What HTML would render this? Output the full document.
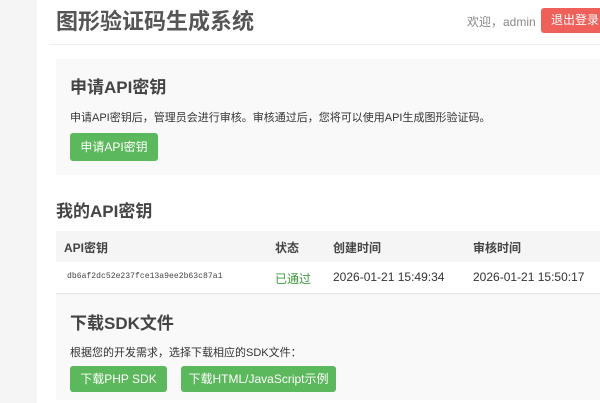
<!DOCTYPE html>
<html><head><meta charset="utf-8"><style>
*{margin:0;padding:0;box-sizing:border-box}
body{width:600px;height:403px;overflow:hidden;background:#fff;font-family:"Liberation Sans","Noto Sans CJK SC",sans-serif;color:#333;position:relative}
.side{position:absolute;left:0;top:0;width:37px;height:403px;background:#f5f5f5}
.abs{position:absolute;white-space:nowrap}
.btn{position:absolute;background:#5cb85c;color:#fff;font-size:12px;border-radius:3px;text-align:center}
</style></head><body>
<div class="side"></div>
<div class="abs" style="left:56px;top:6px;font-size:22px;font-weight:bold;color:#555;line-height:32px">图形验证码生成系统</div>
<div class="abs" style="left:467px;top:13px;font-size:12px;color:#888">欢迎，admin</div>
<div class="abs" style="left:541px;top:8px;width:62px;height:25px;background:#f0605a;color:#fff;font-size:12px;line-height:25px;padding-left:10px;border-radius:3px">退出登录</div>
<div class="abs" style="left:49px;top:44px;width:551px;height:1px;background:#eee"></div>
<div class="abs" style="left:56px;top:59px;width:544px;height:116px;background:#f9f9f9"></div>
<div class="abs" style="left:70px;top:73px;font-size:17px;font-weight:bold;color:#444">申请API密钥</div>
<div class="abs" style="left:70px;top:109px;font-size:11px;color:#333">申请API密钥后，管理员会进行审核。审核通过后，您将可以使用API生成图形验证码。</div>
<div class="btn" style="left:70px;top:133px;width:88px;height:28px;line-height:28px">申请API密钥</div>
<div class="abs" style="left:56px;top:197px;font-size:17px;font-weight:bold;color:#444">我的API密钥</div>
<div class="abs" style="left:56px;top:231px;width:544px;height:31px;background:#f5f5f5"></div>
<div class="abs" style="left:64px;top:239px;font-size:12px;font-weight:bold;color:#444">API密钥</div>
<div class="abs" style="left:275px;top:239px;font-size:12px;font-weight:bold;color:#444">状态</div>
<div class="abs" style="left:333px;top:239px;font-size:12px;font-weight:bold;color:#444">创建时间</div>
<div class="abs" style="left:473px;top:239px;font-size:12px;font-weight:bold;color:#444">审核时间</div>
<div class="abs" style="left:67px;top:272px;font-size:8.1px;font-family:'Liberation Mono',monospace;color:#444">db6af2dc52e237fce13a9ee2b63c87a1</div>
<div class="abs" style="left:275px;top:270px;font-size:12px;color:#3c9a3c">已通过</div>
<div class="abs" style="left:333px;top:270px;font-size:12px;color:#333">2026-01-21 15:49:34</div>
<div class="abs" style="left:473px;top:270px;font-size:12px;color:#333">2026-01-21 15:50:17</div>
<div class="abs" style="left:56px;top:293px;width:544px;height:1px;background:#e5e5e5"></div>
<div class="abs" style="left:56px;top:294px;width:544px;height:106px;background:#f9f9f9"></div>
<div class="abs" style="left:70px;top:309px;font-size:17px;font-weight:bold;color:#444">下载SDK文件</div>
<div class="abs" style="left:70px;top:344px;font-size:11px;color:#333">根据您的开发需求，选择下载相应的SDK文件：</div>
<div class="btn" style="left:70px;top:366px;width:97px;height:26px;line-height:26px">下载PHP SDK</div>
<div class="btn" style="left:181px;top:366px;width:155px;height:26px;line-height:26px">下载HTML/JavaScript示例</div>
</body></html>
